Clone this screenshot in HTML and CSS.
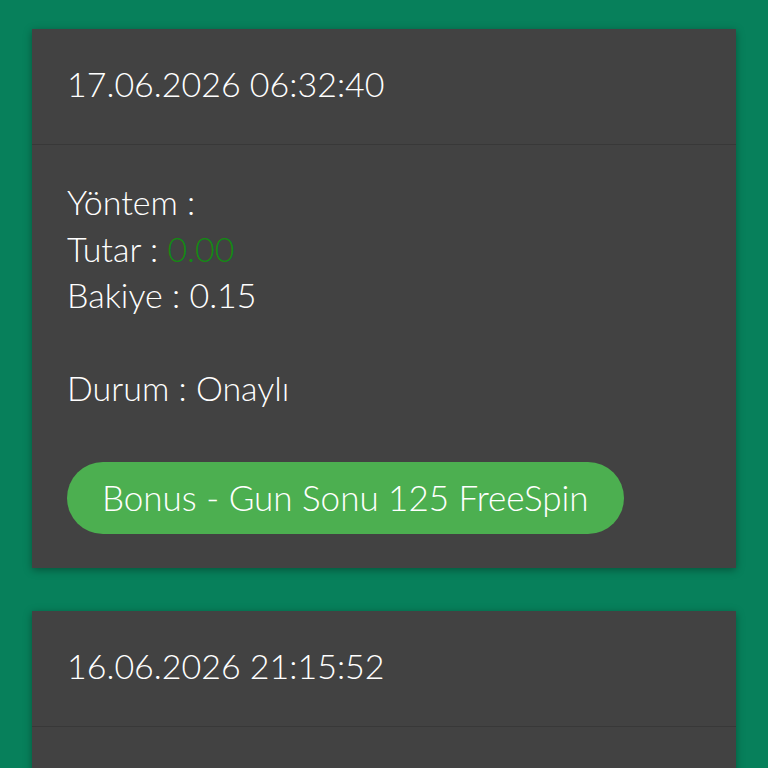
FILE: index.html
```html
<!DOCTYPE html>
<html lang="tr">
<head>
<meta charset="utf-8">
<link rel="stylesheet" href="styles.css">
</head>
<body>
<div class="list">
  <div class="card">
    <div class="card-head">17.06.2026 06:32:40</div>
    <div class="card-body">
      <div class="line">Yöntem : </div>
      <div class="line">Tutar : <span class="amount">0.00</span></div>
      <div class="line">Bakiye : 0.15</div>
      <div class="line blank"></div>
      <div class="line">Durum : Onaylı</div>
      <div class="actions"><span class="badge">Bonus - Gun Sonu 125 FreeSpin</span></div>
    </div>
  </div>
  <div class="card">
    <div class="card-head">16.06.2026 21:15:52</div>
    <div class="card-body card-body-more"></div>
  </div>
</div>
</body>
</html>
```
FILE: styles.css
```css
html, body {
  margin: 0;
  padding: 0;
  background: #07805b;
  font-family: "Lato", "Noto Sans", sans-serif;
  font-weight: 300;
  color: #ffffff;
}
.list {
  padding: 29px 32px 0;
  display: flex;
  flex-direction: column;
  gap: 43px;
}
.card {
  background: #424242;
  box-shadow: 0 2px 8px rgba(0, 0, 0, 0.35);
}
.card-head {
  height: 116px;
  box-sizing: border-box;
  display: flex;
  align-items: center;
  padding: 0 35px 6px;
  font-size: 34px;
  border-bottom: 1px solid #383838;
}
.card-body {
  padding: 34px 35px 34px;
  font-size: 34px;
  line-height: 46.5px;
}
.card-body-more {
  min-height: 120px;
}
.line.blank {
  height: 46.5px;
}
.amount {
  color: #138a13;
}
.actions {
  margin-top: 50px;
  line-height: 1;
}
.badge {
  display: inline-flex;
  align-items: center;
  height: 72px;
  padding: 0 35px;
  border-radius: 36px;
  background: #4caf50;
  font-size: 35px;
}
```
